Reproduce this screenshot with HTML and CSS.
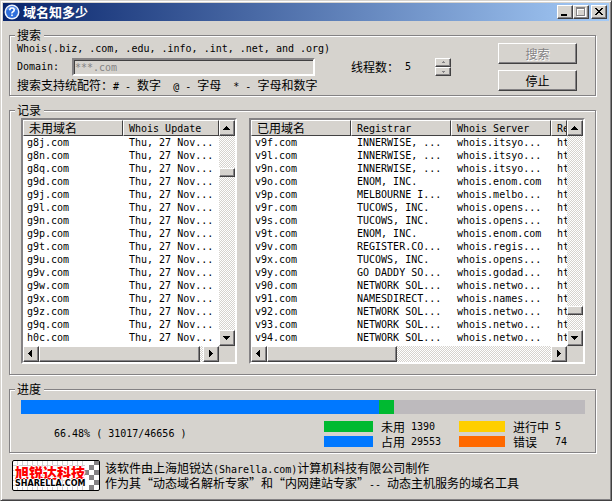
FILE: index.html
```html
<!DOCTYPE html>
<html lang="zh-CN">
<head>
<meta charset="utf-8">
<title>域名知多少</title>
<link rel="stylesheet" href="styles.css">
</head>
<body>
<div class="window">
  <header class="titlebar">
    <svg class="app-icon" viewBox="0 0 16 16" aria-hidden="true"><circle cx="8" cy="8" r="7.5" fill="#eef3fc"/><circle cx="8" cy="8" r="6" fill="#2f6fdc"/><path d="M3.5 6a5 5 0 0 1 9 0" fill="none" stroke="#78a8f4"/><path d="M5.800 6.200q0-2.200 2.200-2.200t2.200 2q0 1.200-1.200 1.800T8 9.500" fill="none" stroke="#fff" stroke-width="1.600"/><rect x="7.200" y="10.500" width="1.600" height="1.600" fill="#fff"/></svg>
    <h1>域名知多少</h1>
    <div class="caption-buttons">
      <button type="button" aria-label="最小化"><svg viewBox="0 0 12 10"><path d="M2 7h6v2H2z"/></svg></button>
      <button type="button" aria-label="最大化" disabled><svg viewBox="0 0 12 10"><path d="M2 1h9v9H2zM3 3v6h7V3z" fill="#fff" fill-rule="evenodd"/><path d="M1 0h9v9H1zM2 2v6h7V2z" fill="#848284" fill-rule="evenodd"/></svg></button>
      <button type="button" class="close" aria-label="关闭"><svg viewBox="0 0 12 10"><path d="M2 1h2v1h1v1h2V2h1V1h2v1H9v1H8v1H7v1h1v1h1v1h1v1H8V7H7V6H5v1H4v1H2V7h1V6h1V5h1V4H4V3H3V2H2z"/></svg></button>
    </div>
  </header>

  <main>
    <fieldset class="search">
      <legend>搜索</legend>
      <div class="search-row">
        <div class="query">
          <p>Whois(.biz, .com, .edu, .info, .int, .net, and .org)</p>
          <div class="domain"><label for="domain">Domain:</label><input id="domain" type="text" value="***.com" disabled></div>
          <p><span class="zh">搜索支持统配符：</span># - <span class="zh">数字</span>&nbsp; @ - <span class="zh">字母</span>&nbsp; * - <span class="zh">字母和数字</span></p>
        </div>
        <div class="threads">
          <span class="zh">线程数：</span><output>5</output>
          <div class="spinner">
            <button type="button" aria-label="增加" disabled><svg viewBox="0 0 5 3"><path d="M2 0h1v1h1v1H1V1h1z"/></svg></button>
            <button type="button" aria-label="减少" disabled><svg viewBox="0 0 5 3"><path d="M1 1h3v1H3v1H2V2H1z"/></svg></button>
          </div>
        </div>
        <div class="actions">
          <button type="button" class="zh" disabled>搜索</button>
          <button type="button" class="zh">停止</button>
        </div>
      </div>
    </fieldset>

    <fieldset class="records">
      <legend>记录</legend>
      <div class="lists">
        <div class="listview">
          <div class="viewport">
            <table>
              <thead><tr><th class="zh name">未用域名</th><th>Whois Update</th></tr></thead>
              <tbody>
                <tr><td>g8j.com</td><td>Thu, 27 Nov...</td></tr>
                <tr><td>g8n.com</td><td>Thu, 27 Nov...</td></tr>
                <tr><td>g8q.com</td><td>Thu, 27 Nov...</td></tr>
                <tr><td>g9d.com</td><td>Thu, 27 Nov...</td></tr>
                <tr><td>g9j.com</td><td>Thu, 27 Nov...</td></tr>
                <tr><td>g9l.com</td><td>Thu, 27 Nov...</td></tr>
                <tr><td>g9n.com</td><td>Thu, 27 Nov...</td></tr>
                <tr><td>g9p.com</td><td>Thu, 27 Nov...</td></tr>
                <tr><td>g9t.com</td><td>Thu, 27 Nov...</td></tr>
                <tr><td>g9u.com</td><td>Thu, 27 Nov...</td></tr>
                <tr><td>g9v.com</td><td>Thu, 27 Nov...</td></tr>
                <tr><td>g9w.com</td><td>Thu, 27 Nov...</td></tr>
                <tr><td>g9x.com</td><td>Thu, 27 Nov...</td></tr>
                <tr><td>g9z.com</td><td>Thu, 27 Nov...</td></tr>
                <tr><td>g9q.com</td><td>Thu, 27 Nov...</td></tr>
                <tr><td>h0c.com</td><td>Thu, 27 Nov...</td></tr>
              </tbody>
            </table>
          </div>
          <div class="scroll vertical unused-y">
            <button type="button" aria-label="向上"><svg viewBox="0 0 8 8"><path d="M3 2h1v1h1v1h1v1h1v1H0V5h1V4h1V3h1z"/></svg></button>
            <span class="gap"></span><span class="thumb"></span><span class="rest"></span>
            <button type="button" aria-label="向下"><svg viewBox="0 0 8 8"><path d="M0 2h7v1H6v1H5v1H4v1H3V5H2V4H1V3H0z"/></svg></button>
          </div>
          <div class="scroll horizontal unused-x">
            <button type="button" aria-label="向左"><svg viewBox="0 0 8 8"><path d="M5 0v7H4V6H3V5H2V4H1V3h1V2h1V1h1V0z"/></svg></button>
            <span class="thumb"></span><span class="rest"></span>
            <button type="button" aria-label="向右"><svg viewBox="0 0 8 8"><path d="M2 0v7h1V6h1V5h1V4h1V3H5V2H4V1H3V0z"/></svg></button>
          </div>
        </div>

        <div class="listview">
          <div class="viewport">
            <table>
              <thead><tr><th class="zh name">已用域名</th><th class="col">Registrar</th><th class="col">Whois Server</th><th>Re</th></tr></thead>
              <tbody>
                <tr><td>v9f.com</td><td>INNERWISE, ...</td><td>whois.itsyo...</td><td>ht</td></tr>
                <tr><td>v9l.com</td><td>INNERWISE, ...</td><td>whois.itsyo...</td><td>ht</td></tr>
                <tr><td>v9n.com</td><td>INNERWISE, ...</td><td>whois.itsyo...</td><td>ht</td></tr>
                <tr><td>v9o.com</td><td>ENOM, INC.</td><td>whois.enom.com</td><td>ht</td></tr>
                <tr><td>v9p.com</td><td>MELBOURNE I...</td><td>whois.melbo...</td><td>ht</td></tr>
                <tr><td>v9r.com</td><td>TUCOWS, INC.</td><td>whois.opens...</td><td>ht</td></tr>
                <tr><td>v9s.com</td><td>TUCOWS, INC.</td><td>whois.opens...</td><td>ht</td></tr>
                <tr><td>v9t.com</td><td>ENOM, INC.</td><td>whois.enom.com</td><td>ht</td></tr>
                <tr><td>v9v.com</td><td>REGISTER.CO...</td><td>whois.regis...</td><td>ht</td></tr>
                <tr><td>v9x.com</td><td>TUCOWS, INC.</td><td>whois.opens...</td><td>ht</td></tr>
                <tr><td>v9y.com</td><td>GO DADDY SO...</td><td>whois.godad...</td><td>ht</td></tr>
                <tr><td>v90.com</td><td>NETWORK SOL...</td><td>whois.netwo...</td><td>ht</td></tr>
                <tr><td>v91.com</td><td>NAMESDIRECT...</td><td>whois.names...</td><td>ht</td></tr>
                <tr><td>v92.com</td><td>NETWORK SOL...</td><td>whois.netwo...</td><td>ht</td></tr>
                <tr><td>v93.com</td><td>NETWORK SOL...</td><td>whois.netwo...</td><td>ht</td></tr>
                <tr><td>v94.com</td><td>NETWORK SOL...</td><td>whois.netwo...</td><td>ht</td></tr>
              </tbody>
            </table>
          </div>
          <div class="scroll vertical used-y">
            <button type="button" aria-label="向上"><svg viewBox="0 0 8 8"><path d="M3 2h1v1h1v1h1v1h1v1H0V5h1V4h1V3h1z"/></svg></button>
            <span class="gap"></span><span class="thumb"></span><span class="rest"></span>
            <button type="button" aria-label="向下"><svg viewBox="0 0 8 8"><path d="M0 2h7v1H6v1H5v1H4v1H3V5H2V4H1V3H0z"/></svg></button>
          </div>
          <div class="scroll horizontal used-x">
            <button type="button" aria-label="向左"><svg viewBox="0 0 8 8"><path d="M5 0v7H4V6H3V5H2V4H1V3h1V2h1V1h1V0z"/></svg></button>
            <span class="thumb"></span><span class="rest"></span>
            <button type="button" aria-label="向右"><svg viewBox="0 0 8 8"><path d="M2 0v7h1V6h1V5h1V4h1V3H5V2H4V1H3V0z"/></svg></button>
          </div>
        </div>
      </div>
    </fieldset>

    <fieldset class="progress">
      <legend>进度</legend>
      <div class="bar"><span class="taken" style="width:63.4%"></span><span class="free" style="width:2.8%"></span></div>
      <div class="status">
        <p class="percent">66.48% ( 31017/46656 )</p>
        <dl class="key">
          <div><dt class="zh"><i class="swatch free"></i>未用</dt><dd>1390</dd></div>
          <div><dt class="zh"><i class="swatch taken"></i>占用</dt><dd>29553</dd></div>
        </dl>
        <dl class="key wide">
          <div><dt class="zh"><i class="swatch running"></i>进行中</dt><dd>5</dd></div>
          <div><dt class="zh"><i class="swatch failed"></i>错误</dt><dd>74</dd></div>
        </dl>
      </div>
    </fieldset>
  </main>

  <footer>
    <div class="logo">
      <svg viewBox="0 0 86 29" aria-hidden="true">
        <path d="M0 4.500h72M0 9.500h72M0 14.500h72M0 19.500h72M0 24.500h72M4.500 0v29M9.500 0v29M14.500 0v29M19.500 0v29M24.500 0v29M29.500 0v29M34.500 0v29M39.500 0v29M44.500 0v29M49.500 0v29M54.500 0v29M59.500 0v29M64.500 0v29M69.500 0v29" stroke="#ceced0" fill="none"/>
        <path d="M81 0h5v4h-5zM76 4h5v5h-5zM71 9h5v5h-5zM81 9h5v5h-5zM76 14h5v5h-5zM81 19h5v5h-5zM76 24h5v5h-5z" fill="#848284"/>
      </svg>
      <strong>旭锐达科技</strong><span>SHARELLA.COM</span>
    </div>
    <div class="about">
      <p><span class="zh">该软件由上海旭锐达</span>(Sharella.com)<span class="zh">计算机科技有限公司制作</span></p>
      <p><span class="zh">作为其“动态域名解析专家”和“内网建站专家”</span>-- <span class="zh">动态主机服务的域名工具</span></p>
    </div>
  </footer>
</div>
</body>
</html>
```
FILE: styles.css
```css
:root {
  --face: #d6d3ce;
  --shadow: #848284;
  --dark: #424142;
  --blue: #0078ff;
  --green: #00ba31;
  --mono: "DejaVu Sans Mono", "Noto Sans CJK SC", monospace;
}
* { box-sizing: border-box; margin: 0; padding: 0; }
body { background: var(--face); color: #000; font: 10px/14px var(--mono); }
button, input { font: inherit; color: inherit; border-radius: 0; }
svg { display: block; }
button svg { fill: #000; shape-rendering: crispEdges; }
.zh, legend { font-family: "Noto Sans CJK SC", sans-serif; font-size: 12px; font-weight: 400; line-height: 14px; }

.window {
  min-height: 100vh;
  padding: 2px;
  border: 1px solid;
  border-color: var(--face) var(--dark) var(--dark) var(--face);
  box-shadow: inset 1px 1px #fff, inset -1px -1px var(--shadow);
}
.titlebar {
  display: flex;
  align-items: center;
  height: 18px;
  padding: 0 2px 0 1px;
  background: linear-gradient(90deg, #08246b, #a5cbf7);
}
.app-icon { width: 16px; height: 16px; margin-right: 3px; }
h1 { color: #fff; font: bold 13px/16px "Noto Sans CJK SC", sans-serif; }
.caption-buttons { display: flex; margin-left: auto; }
button {
  background: var(--face);
  border: 1px solid;
  border-color: #fff var(--dark) var(--dark) #fff;
  box-shadow: inset -1px -1px var(--shadow);
}
.caption-buttons button { width: 16px; height: 14px; padding: 1px; }
.caption-buttons svg { width: 12px; height: 10px; }
.caption-buttons .close { margin-left: 2px; }

main { padding: 7px 13px 0 6px; }
fieldset {
  min-width: 0;
  margin-bottom: 7px;
  padding: 1px 10px 10px 11px;
  border: 1px solid var(--shadow);
  box-shadow: 1px 1px #fff, inset 1px 1px #fff;
}
legend { height: 14px; padding: 0 3px 0 2px; margin-left: -6px; background: var(--face); }
fieldset.search { padding: 0 18px 3px 7px; }
.search legend { margin-left: -2px; }
.search-row, .threads, .domain { display: flex; align-items: center; }
.query { width: 298px; white-space: nowrap; }
.query p { height: 14px; }
.domain { margin: 2px 0; }
.domain label { width: 55px; }
.domain input {
  flex: 1;
  min-width: 0;
  height: 18px;
  padding: 0 1px;
  background: var(--face);
  color: var(--shadow);
  border: 2px solid;
  border-color: var(--shadow) #fff #fff var(--shadow);
  box-shadow: inset 1px 1px var(--dark);
}
.threads { width: 100px; margin-left: 36px; }
.threads output { margin-left: 6px; }
.spinner { display: grid; margin-left: auto; }
.spinner button { width: 16px; height: 9px; display: grid; place-items: center; }
.spinner svg { width: 5px; height: 3px; fill: var(--shadow); }
.actions { display: grid; gap: 6px; width: 79px; margin-left: auto; }
.actions button { height: 21px; }
.actions button:disabled { color: var(--shadow); text-shadow: 1px 1px #fff; }

.lists { display: grid; grid-template-columns: 9fr 14fr; gap: 12px; }
.listview {
  display: grid;
  grid-template-columns: minmax(0, 1fr) 16px;
  border: 2px solid;
  border-color: var(--shadow) #fff #fff var(--shadow);
  background: var(--face);
}
.viewport { overflow: hidden; padding-bottom: 2px; background: #fff; }
table { width: 100%; table-layout: fixed; border-collapse: separate; border-spacing: 0; }
th, td { padding: 0 0 0 6px; text-align: left; white-space: nowrap; overflow: hidden; }
th {
  height: 16px;
  padding-left: 5px;
  background: var(--face);
  font-weight: 400;
  line-height: 13px;
  border: 1px solid;
  border-color: #fff var(--dark) var(--dark) #fff;
}
.name, .col { width: 100px; }
td { height: 13px; line-height: 13px; }
td:first-child { padding-left: 4px; }
.scroll { display: flex; background: repeating-conic-gradient(#fff 0 25%, var(--face) 0 50%) 0 0 / 2px 2px; }
.vertical { flex-direction: column; }
.scroll button { flex: none; width: 16px; height: 16px; display: grid; place-items: center; }
.scroll svg { width: 8px; height: 8px; }
.thumb {
  flex: none;
  background: var(--face);
  border: 1px solid;
  border-color: #fff var(--dark) var(--dark) #fff;
  box-shadow: inset -1px -1px var(--shadow);
}
.vertical .thumb { height: 9px; }
.rest { flex: 1; }
.unused-y .gap { height: 32px; }
.used-y .gap { height: 170px; }
.unused-x .thumb { flex: 161; }
.unused-x .rest { flex: 3; }
.used-x .thumb { flex: 129; }
.used-x .rest { flex: 155; }

fieldset.progress { padding: 4px 10px 3px 11px; }
.bar { display: flex; height: 14px; background: #bdbabd; }
.taken { background: var(--blue); }
.free { background: var(--green); }
.running { background: #ffcf00; }
.failed { background: #ff6900; }
.status { display: flex; align-items: center; margin-top: 5px; white-space: nowrap; }
.percent { margin-left: 33px; }
.key { width: 135px; margin-left: auto; }
.key.wide { width: 126px; margin-left: 0; }
.key div, .key dt { display: flex; align-items: center; height: 15px; }
.key dt { width: 87px; }
.wide dt { width: 96px; }
.swatch { width: 49px; height: 11px; margin-right: 8px; }
.wide .swatch { width: 46px; }

footer { display: flex; align-items: center; gap: 5px; padding: 0 9px; }
.logo {
  position: relative;
  flex: none;
  width: 88px;
  height: 31px;
  padding: 4px 2px 0;
  border: 1px solid #000;
  border-radius: 2px;
  background: #fff;
}
.logo svg { position: absolute; inset: 0; width: 86px; height: 29px; }
.logo strong {
  display: block;
  position: relative;
  color: #f00;
  font: 900 14px/14px "Noto Sans CJK SC", sans-serif;
  text-shadow: 1px 0 #fff, -1px 0 #fff, 0 1px #fff, 0 -1px #fff;
}
.logo span {
  display: block;
  position: relative;
  font: bold 8px/9px "DejaVu Sans", sans-serif;
  text-shadow: 1px 0 #fff, -1px 0 #fff, 0 1px #fff, 0 -1px #fff;
}
.about { line-height: 15px; white-space: nowrap; }
.about p { height: 15px; }
```
